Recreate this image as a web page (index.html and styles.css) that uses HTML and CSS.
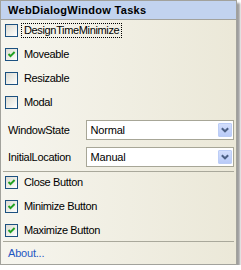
FILE: index.html
```html
<!DOCTYPE html>
<html>
<head>
<meta charset="utf-8">
<link rel="stylesheet" href="styles.css">
</head>
<body>
<div class="panel">
  <div class="header">WebDialogWindow Tasks</div>
  <div class="section">
    <div class="check-row"><span class="cb"></span><span class="label focus">DesignTimeMinimize</span></div>
    <div class="check-row"><span class="cb"><svg class="tick" viewBox="0 0 11 11" width="11" height="11"><path d="M2.5 5 L4.5 7.2 L8.6 3"/></svg></span><span class="label">Moveable</span></div>
    <div class="check-row"><span class="cb"></span><span class="label">Resizable</span></div>
    <div class="check-row"><span class="cb"></span><span class="label">Modal</span></div>
    <div class="combos">
      <div class="combo-row">
        <span class="combo-label">WindowState</span>
        <div class="combo"><span class="value">Normal</span><span class="btn"><svg viewBox="0 0 12 12" width="12" height="12"><path d="M2.8 4.3 L6 7.3 L9.2 4.3"/></svg></span></div>
      </div>
      <div class="combo-row">
        <span class="combo-label">InitialLocation</span>
        <div class="combo"><span class="value">Manual</span><span class="btn"><svg viewBox="0 0 12 12" width="12" height="12"><path d="M2.8 4.3 L6 7.3 L9.2 4.3"/></svg></span></div>
      </div>
    </div>
  </div>
  <div class="sep"></div>
  <div class="section">
    <div class="check-row"><span class="cb"><svg class="tick" viewBox="0 0 11 11" width="11" height="11"><path d="M2.5 5 L4.5 7.2 L8.6 3"/></svg></span><span class="label">Close Button</span></div>
    <div class="check-row"><span class="cb"><svg class="tick" viewBox="0 0 11 11" width="11" height="11"><path d="M2.5 5 L4.5 7.2 L8.6 3"/></svg></span><span class="label">Minimize Button</span></div>
    <div class="check-row"><span class="cb"><svg class="tick" viewBox="0 0 11 11" width="11" height="11"><path d="M2.5 5 L4.5 7.2 L8.6 3"/></svg></span><span class="label">Maximize Button</span></div>
  </div>
  <div class="sep"></div>
  <div class="about"><a class="link">About...</a></div>
</div>
</body>
</html>
```
FILE: styles.css
```css
html, body { margin: 0; padding: 0; background: #ffffff; }
body { font-family: "Liberation Sans", Arial, sans-serif; font-size: 11px; color: #000; }
.panel {
  width: 235px;
  height: 263px;
  border: 1px solid #a2a29c;
  background: linear-gradient(to right, #f6f5ee, #ebe8d8);
  box-shadow: 3px 3px 2px rgba(0,0,0,0.38);
  display: flex;
  flex-direction: column;
}
.header {
  height: 18px;
  line-height: 18px;
  background: #c2d3ef;
  border-bottom: 1px solid #a2a29c;
  font-weight: bold;
  padding-left: 7px;
  letter-spacing: 0.3px;
}
.section {
  display: flex;
  flex-direction: column;
  gap: 11px;
  padding: 4px 2px 4px 4px;
}
.check-row {
  height: 13px;
  display: flex;
  align-items: center;
}
.cb {
  width: 11px;
  height: 11px;
  border: 1px solid #1c5180;
  background: linear-gradient(135deg, #dcdbd3 0%, #f4f4f0 70%, #ffffff 100%);
  flex: none;
  display: flex;
}
.tick path { fill: none; stroke: #21a121; stroke-width: 1.9; }
.label {
  margin-left: 3px;
  border: 1px dotted transparent;
  padding: 0 2px;
  line-height: 13px;
  letter-spacing: -0.35px;
  white-space: nowrap;
}
.label.focus { border-color: #000; }
.combos { display: flex; flex-direction: column; gap: 7px; }
.combo-row { display: flex; align-items: center; height: 20px; }
.combo-label { width: 79px; padding-left: 3px; letter-spacing: -0.3px; }
.combo {
  width: 149px;
  height: 18px;
  border: 1px solid #a7a697;
  background: #fff;
  display: flex;
  align-items: center;
}
.value { flex: 1; padding-left: 4px; letter-spacing: -0.2px; }
.btn {
  width: 12px;
  height: 12px;
  margin-right: 1px;
  border: 1px solid #bccdf6;
  background: linear-gradient(#d3defc, #b9cbf8);
  border-radius: 1px;
  display: flex;
}
.btn path { fill: none; stroke: #4d6185; stroke-width: 2; }
.sep { height: 1px; margin: 0 2px; background: #a9a89b; }
.about { padding: 5px 0 0 7px; line-height: 13px; }
.link { color: #1f57c3; letter-spacing: -0.2px; }
```
